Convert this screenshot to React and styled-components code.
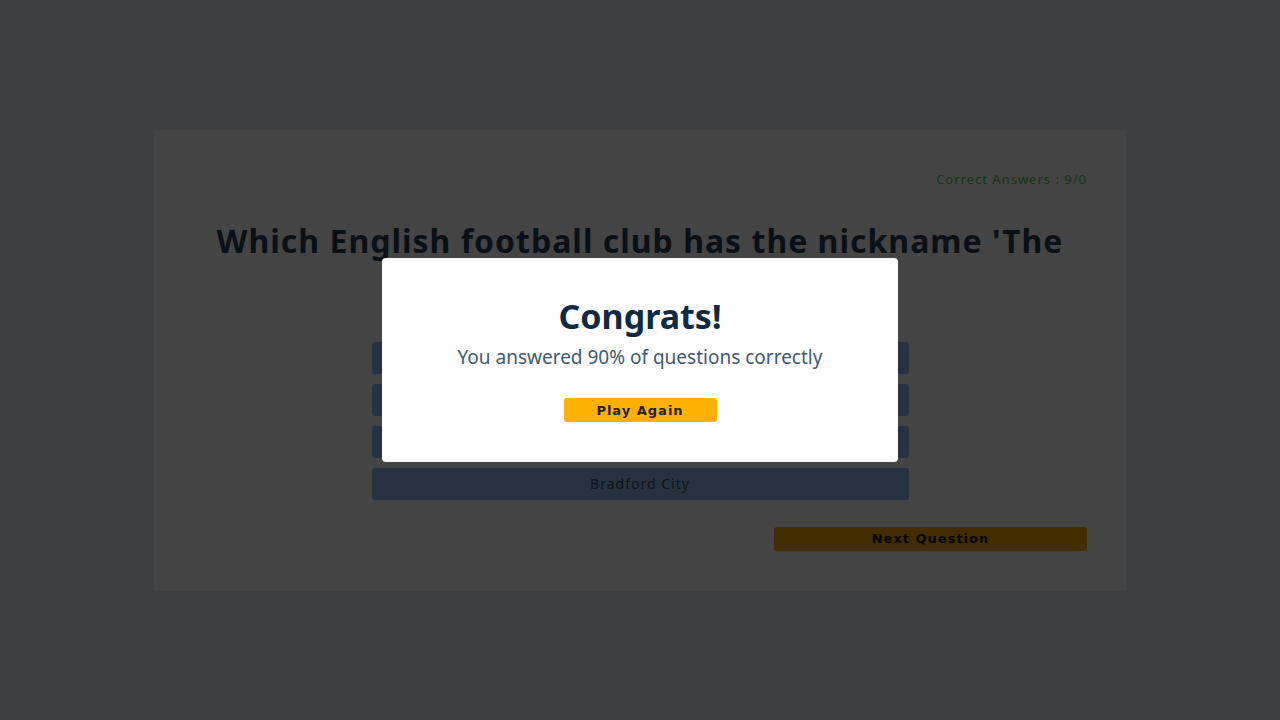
import styled, { createGlobalStyle } from 'styled-components';

const GlobalStyle = createGlobalStyle`
  * {
    box-sizing: border-box;
  }

  body {
    margin: 0;
    background: #9b9ea3;
    font-family: 'Noto Sans', 'Open Sans', sans-serif;
  }
`;

const answers = ['Leeds United', 'Hull City', 'Burnley', 'Bradford City'];

const App = () => {
  return (
    <>
      <GlobalStyle />
      <Page>
        <Card>
          <Score>Correct Answers : 9/0</Score>
          <Question>
            Which English football club has the nickname 'The Bantams'?
          </Question>
          <Answers>
            {answers.map((answer) => (
              <Answer key={answer}>{answer}</Answer>
            ))}
          </Answers>
          <Footer>
            <NextButton>Next Question</NextButton>
          </Footer>
        </Card>
      </Page>
      <Overlay>
        <Modal>
          <ModalTitle>Congrats!</ModalTitle>
          <ModalText>You answered 90% of questions correctly</ModalText>
          <PlayButton>Play Again</PlayButton>
        </Modal>
      </Overlay>
    </>
  );
};

const Page = styled.div`
  display: flex;
  justify-content: center;
  align-items: center;

  width: 100%;
  min-height: 100vh;
`;

const Card = styled.div`
  display: flex;
  flex-direction: column;

  width: 972px;
  height: 461px;
  padding: 40px 39px;
  background: #aaaaaa;
`;

const Score = styled.p`
  margin: 0;
  align-self: flex-end;

  font-size: 13px;
  font-weight: 400;
  line-height: 18px;
  letter-spacing: 1px;
  color: #3c7f3c;
`;

const Question = styled.h1`
  margin: 34px 0 0;

  font-size: 32px;
  font-weight: 700;
  line-height: 38px;
  letter-spacing: 1px;
  text-align: center;
  color: #1a2a3a;
`;

const Answers = styled.div`
  display: flex;
  flex-direction: column;
  gap: 10px;

  width: 537px;
  margin: 44px auto 0;
`;

const Answer = styled.button`
  height: 32px;
  border: none;
  border-radius: 3px;
  background: #5a809e;

  font-family: inherit;
  font-size: 14px;
  letter-spacing: 1px;
  color: #26323e;
  cursor: pointer;
`;

const Footer = styled.div`
  display: flex;
  justify-content: flex-end;
  margin-top: 27px;
`;

const NextButton = styled.button`
  width: 313px;
  height: 24px;
  border: none;
  border-radius: 3px;
  background: #a57100;

  font-family: 'DejaVu Sans', sans-serif;
  font-size: 13px;
  font-weight: 700;
  letter-spacing: 1px;
  color: #111;
  cursor: pointer;
`;

const Overlay = styled.div`
  position: fixed;
  inset: 0;

  display: flex;
  justify-content: center;
  align-items: center;
  background: rgba(0, 0, 0, 0.6);
`;

const Modal = styled.div`
  display: flex;
  flex-direction: column;
  align-items: center;

  width: 516px;
  height: 204px;
  padding-top: 36px;
  border-radius: 4px;
  background: #fff;
`;

const ModalTitle = styled.h2`
  margin: 0;

  font-size: 34px;
  font-weight: 700;
  line-height: 44px;
  color: #0f2a44;
`;

const ModalText = styled.p`
  margin: 6px 0 0;

  font-size: 19px;
  line-height: 26px;
  color: #3d5a78;
`;

const PlayButton = styled.button`
  width: 153px;
  height: 24px;
  margin-top: 28px;
  border: none;
  border-radius: 3px;
  background: #ffb000;

  font-family: 'DejaVu Sans', sans-serif;
  font-size: 13px;
  font-weight: 700;
  letter-spacing: 1px;
  color: #222;
  cursor: pointer;
`;

export default App;
